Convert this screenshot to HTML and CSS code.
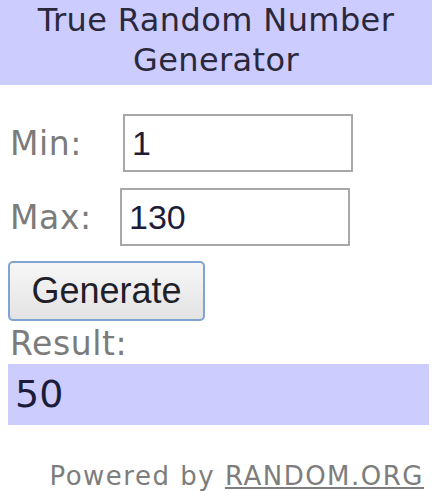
FILE: index.html
```html
<!DOCTYPE html>
<html>
<head>
<meta charset="utf-8">
<link rel="stylesheet" href="styles.css">
</head>
<body>
<div class="widget">
  <div class="title">True Random Number<br>Generator</div>
  <div class="form">
    <div class="row row-min">
      <span class="label">Min:</span>
      <input class="field" type="text" value="1">
    </div>
    <div class="row row-max">
      <span class="label">Max:</span>
      <input class="field" type="text" value="130">
    </div>
    <button class="generate" type="button">Generate</button>
    <div class="label result-label">Result:</div>
    <div class="result">50</div>
  </div>
  <div class="powered">Powered by <a class="link" href="#">RANDOM.ORG</a></div>
</div>
</body>
</html>
```

FILE: styles.css
```css
html, body {
  margin: 0;
  padding: 0;
  background: #ffffff;
}

.widget {
  width: 434px;
  font-family: "DejaVu Sans", Verdana, sans-serif;
}

.title {
  background: #ccccff;
  color: #2a283a;
  text-align: center;
  font-size: 32px;
  line-height: 40px;
  letter-spacing: 0.4px;
  height: 80px;
  padding-bottom: 5px;
  width: 432px;
}

.form {
  padding-left: 8px;
  padding-top: 29px;
}

.row {
  display: grid;
  grid-template-columns: 113px 230px;
  align-items: center;
  height: 58px;
}

.row-max {
  margin-top: 16px;
  grid-template-columns: 112px 230px;
}

.label {
  color: #7b7b7b;
  font-size: 33px;
  letter-spacing: 0.6px;
  padding-left: 2px;
}

.field {
  box-sizing: border-box;
  width: 230px;
  height: 58px;
  border: 2px solid #a8a8a8;
  margin: 0;
  padding: 0 0 0 7px;
  font-family: "Liberation Sans", Arial, sans-serif;
  font-size: 34px;
  color: #1d1d3a;
  background: #ffffff;
  outline: none;
}

.row-min .field {
  margin-left: 2px;
}

.generate {
  display: block;
  box-sizing: border-box;
  margin-top: 15px;
  width: 197px;
  height: 60px;
  border: 2px solid #7fa3d2;
  border-radius: 5px;
  background: linear-gradient(#f7f7f7, #e3e3e3);
  font-family: "Liberation Sans", Arial, sans-serif;
  font-size: 36px;
  color: #1f1f2a;
  padding: 0;
}

.result-label {
  margin-top: 4px;
  line-height: 38px;
}

.result {
  margin-top: 1px;
  box-sizing: border-box;
  width: 421px;
  height: 61px;
  background: #ccccff;
  color: #1c1c3a;
  font-size: 38px;
  line-height: 61px;
  padding-left: 7px;
}

.powered {
  margin-top: 36px;
  text-align: right;
  padding-right: 10px;
  font-size: 26px;
  line-height: 30px;
  letter-spacing: 1.5px;
  color: #7d7d7d;
}

.link {
  color: #7d7d7d;
  text-decoration: underline;
}
```
